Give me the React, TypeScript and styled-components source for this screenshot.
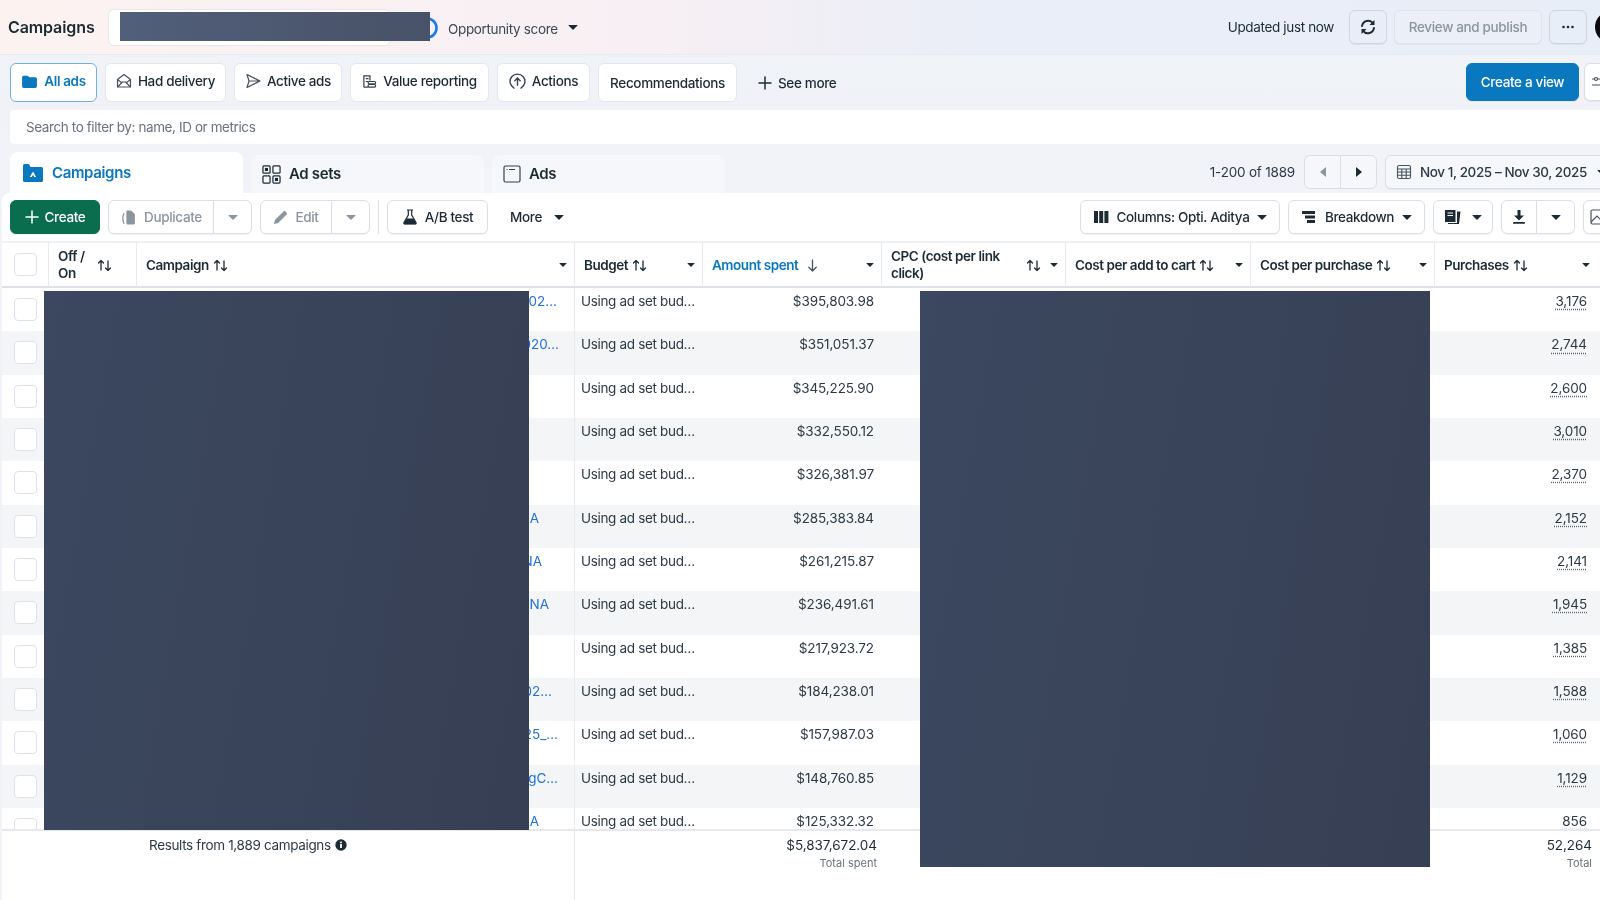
import React from "react";
import styled, { createGlobalStyle } from "styled-components";

const Global = createGlobalStyle`
  html, body { margin: 0; padding: 0; background: #f0f3f8; }
  * { box-sizing: border-box; }
  body { font-family: Inter, "Noto Sans", "Liberation Sans", sans-serif; color: #1c2b33; font-size: 14px; letter-spacing: -.35px; overflow: hidden; }
`;

const Page = styled.div`
  position: relative; width: 1600px; height: 900px; overflow: hidden; display: flex; flex-direction: column;
  background: linear-gradient(180deg, #eff3f8 0, #f0f2f7 110px, #f1f3f8 193px);
  filter: blur(.3px);
`;
const Redaction = styled.div<{ $x: number; $y: number; $w: number; $h: number; $light?: boolean }>`
  position: absolute; left: ${p => p.$x}px; top: ${p => p.$y}px; width: ${p => p.$w}px; height: ${p => p.$h}px;
  background: ${p => p.$light ? "linear-gradient(90deg,#525f7a,#485268)" : "linear-gradient(100deg,#3b485f,#373f54)"};
`;
const TopBar = styled.header`
  height: 55px; flex: none; display: flex; align-items: center; padding-left: 8px; overflow: hidden;
  background: linear-gradient(90deg, #fcf3f1 0, #f7eff3 40%, #eaeef8 62%, #e8eef8 100%);
  border-bottom: 1px solid #e8eaef;
`;
const Title = styled.h1`margin: 0; font-size: 16px; font-weight: 600; line-height: 20px; width: 100px; flex: none; letter-spacing: -.1px;`;
const Pill = styled.div`width: 283px; height: 37px; margin-top: 1px; background: #fff; border: 1px solid #e4e6ec; border-radius: 6px; flex: none;`;
const Ring = styled.svg`width: 22px; height: 22px; margin-left: 25px; margin-top: 2px; flex: none;`;
const ScoreLabel = styled.span`margin-left: 10px; margin-top: 3px; font-size: 13.5px; color: #3b4a55;`;
const TopRight = styled.div`margin-left: auto; margin-right: -27px; display: flex; align-items: center; flex: none; gap: 7px;`;
const Updated = styled.span`font-size: 13.5px; margin-right: 8px;`;
const Btn = styled.div<{ $w?: number; $h?: number; $off?: boolean; $active?: boolean; $flat?: boolean; $gap?: number }>`
  display: inline-flex; align-items: center; justify-content: center; gap: ${p => p.$gap ?? 6}px; flex: none;
  width: ${p => p.$w ? p.$w + "px" : "auto"}; height: ${p => p.$h ?? 34}px;
  background: ${p => p.$flat ? "transparent" : "#fff"}; border-radius: 6px;
  border: ${p => p.$flat ? "none" : p.$active ? "1px solid #6fb0dc" : "1px solid #dadfe6"};
  color: ${p => p.$off ? "#8b959e" : p.$active ? "#0a78be" : "#1c2b33"};
  font-size: 13.5px; font-weight: ${p => p.$active ? 600 : 500}; white-space: nowrap;
  box-shadow: ${p => p.$flat ? "none" : "0 1px 0 rgba(30,50,80,.06)"};
`;
const TopBtn = styled(Btn)<{ $ghost?: boolean }>`
  background: ${p => p.$ghost ? "#eaeff8" : "transparent"}; border-color: ${p => p.$ghost ? "#dfe4ec" : "#cfd5de"};
`;
const Avatar = styled.div`width: 32px; height: 32px; border-radius: 50%; background: #0b0b0f; flex: none; margin-left: 1px;`;

const ViewsBar = styled.nav`height: 55px; flex: none; display: flex; align-items: flex-start; padding: 8px 0 0 10px; gap: 8px; overflow: hidden;`;
const ViewBtn = styled(Btn)<{ $lift?: boolean }>`height: 39px; padding-bottom: ${p => p.$lift ? 3 : 0}px; border-color: ${p => p.$active ? "#6fb0dc" : "#e3e6eb"}; box-shadow: none; font-weight: ${p => p.$active ? 600 : 500};`;
const SeeMore = styled(Btn)`height: 39px; margin-left: 13px; gap: 6px; color: #1c2b33;`;
const ViewsRight = styled.div`margin-left: auto; margin-right: -40px; display: flex; gap: 5px; flex: none;`;
const PrimaryBtn = styled(Btn)`background: #0a78be; border-color: #0a78be; color: #fff; height: 38px; width: 113px;`;
const EdgeBtn = styled(Btn)`justify-content: flex-start; padding-left: 6px;`;

const SearchRow = styled.div`height: 34px; flex: none; margin-left: 10px; background: #fff; border-radius: 4px 0 0 4px; padding-left: 16px; display: flex; align-items: center; color: #67727b; font-size: 13.5px; letter-spacing: -.4px;`;

const TabsRow = styled.div`height: 49px; flex: none; display: flex; align-items: flex-end; padding-left: 10px; gap: 8px; overflow: hidden;`;
const Tab = styled.div<{ $active?: boolean }>`
  width: 233px; height: ${p => p.$active ? 41 : 38}px; border-radius: 8px 8px 0 0; flex: none;
  background: ${p => p.$active ? "#fff" : "#f5f7fa"}; display: flex; align-items: center; gap: 8px;
  padding-left: ${p => p.$active ? 12 : 11}px; font-size: 15px; font-weight: 600; line-height: 24px; letter-spacing: -.35px;
  color: ${p => p.$active ? "#0a78be" : "#1c2b33"};
`;
const TabsRight = styled.div`margin-left: auto; margin-right: -40px; align-self: flex-start; margin-top: 11px; display: flex; align-items: center; flex: none;`;
const Range = styled.span`font-size: 13.5px; margin-right: 9px; color: #2b3a44; letter-spacing: -.2px;`;
const Pager = styled.div`display: flex; width: 73px; height: 34px; border: 1px solid #dadfe6; border-radius: 6px; background: #f5f7fa; margin-right: 8px;`;
const PagerCell = styled.div<{ $split?: boolean }>`flex: 1; display: flex; align-items: center; justify-content: center; border-right: ${p => p.$split ? "1px solid #dadfe6" : "none"};`;
const DateBtn = styled(Btn)`width: 255px; background: #f5f7fa; justify-content: flex-start; padding-left: 10px; gap: 8px; font-weight: 500; color: #2b3a44; letter-spacing: -.42px;`;
const DateCaret = styled.span`display: inline-flex; margin-left: 2px;`;

const Panel = styled.main`flex: 1; margin-left: 2px; background: #fff; border-radius: 8px 0 0 8px; display: flex; flex-direction: column; min-height: 0;`;
const Toolbar = styled.div`height: 50px; flex: none; display: flex; align-items: flex-start; padding: 7px 0 0 8px; gap: 8px; border-bottom: 2px solid #f0f1f4; overflow: hidden;`;
const CreateBtn = styled(Btn)`background: #0a6e4e; border-color: #0a6e4e; color: #fff; width: 90px;`;
const Split = styled.div<{ $w: number }>`display: flex; flex: none; width: ${p => p.$w}px; height: 34px; border: 1px solid #dadfe6; border-radius: 6px; box-shadow: 0 1px 0 rgba(30,50,80,.06);`;
const SplitMain = styled.div<{ $off?: boolean }>`flex: 1; display: flex; align-items: center; justify-content: center; gap: 7px; font-size: 13.5px; font-weight: 500; color: ${p => p.$off ? "#8b959e" : "#1c2b33"}; border-right: 1px solid #dadfe6;`;
const SplitEnd = styled.div`width: 37px; flex: none; display: flex; align-items: center; justify-content: center;`;
const Sep = styled.div`width: 1px; height: 34px; background: #dfe2e7; flex: none;`;
const More = styled(Btn)`margin-left: 12px; gap: 12px; width: 58px;`;
const ToolRight = styled.div`margin-left: auto; margin-right: -43px; display: flex; gap: 8px; flex: none;`;

const COLS = "47px 88px 438px 128px 179px 184px 185px 184px 165px";
const HeadRow = styled.div`display: grid; grid-template-columns: ${COLS}; height: 45px; flex: none; border-bottom: 2px solid #dfe2e6;`;
const HeadCell = styled.div<{ $accent?: boolean; $last?: boolean; $gap?: number }>`
  display: flex; align-items: center; padding: 1px ${p => p.$last ? 10 : 7}px 0 9px; gap: ${p => p.$gap ?? 4}px; font-size: 13.5px; font-weight: 600; line-height: 17px; letter-spacing: -.45px;
  color: ${p => p.$accent ? "#0a78be" : "#1c2b33"}; border-right: ${p => p.$last ? "none" : "1px solid #e8eaee"};
`;
const HeadText = styled.span<{ $w: number }>`flex: none; width: ${p => p.$w}px;`;
const CaretSlot = styled.span`margin-left: auto; display: inline-flex; flex: none;`;
const CheckCell = styled.div<{ $bordered?: boolean }>`display: flex; align-items: center; padding-left: 12px; border-right: ${p => p.$bordered ? "1px solid #e8eaee" : "none"};`;
const Box = styled.div`width: 23px; height: 23px; background: #fff; border: 1px solid #dfe3e8; border-radius: 4px;`;

const Rows = styled.div`flex: 1; min-height: 0; overflow: hidden;`;
const Row = styled.div<{ $alt: boolean }>`display: grid; grid-template-columns: ${COLS}; height: 43.33px; background: ${p => p.$alt ? "#f4f5f7" : "#fff"};`;
const Cell = styled.div<{ $right?: boolean; $divider?: boolean; $inset?: number }>`
  padding: 4px ${p => p.$inset ?? 8}px 0 6px; line-height: 18px; font-size: 13.5px; color: #2b3a44; white-space: nowrap; overflow: hidden;
  text-align: ${p => p.$right ? "right" : "left"}; letter-spacing: ${p => p.$right ? "-.1px" : "-.33px"}; border-right: ${p => p.$divider ? "1px solid #e9ebef" : "none"};
`;
const LinkText = styled.a<{ $inset: number }>`display: block; text-align: right; padding-right: ${p => p.$inset}px; color: #1f6fdc; letter-spacing: 0;`;
const Dotted = styled.span`text-decoration: underline dotted #5a6670; text-underline-offset: 3px;`;
const Foot = styled.footer`display: grid; grid-template-columns: ${COLS}; height: 71px; flex: none; border-top: 2px solid #e6e8eb; background: #fff;`;
const ResultsCell = styled.div`grid-column: 1 / span 3; padding: 5px 0 0 147px; font-size: 13.5px; line-height: 18px; color: #2b3a44; display: flex; gap: 4px; align-items: flex-start; border-right: 1px solid #e9ebef;`;
const InfoSlot = styled.span`display: inline-flex; height: 18px; align-items: center;`;
const TotalCell = styled.div<{ $inset?: number }>`text-align: right; padding: 5px ${p => p.$inset ?? 5}px 0 0;`;
const TotalValue = styled.div`font-size: 13.5px; line-height: 18px; font-weight: 400; color: #1c2b33; min-height: 18px; letter-spacing: -.05px;`;
const TotalNote = styled.div`font-size: 11px; line-height: 18px; color: #67727b; letter-spacing: 0;`;

const Glyph = styled.svg<{ $s?: number }>`width: ${p => p.$s ?? 16}px; height: ${p => p.$s ?? 16}px; flex: none; display: block;`;
const Caret = styled.i<{ $c?: string; $w?: number }>`
  display: inline-block; flex: none; width: 0; height: 0; font-style: normal;
  border-left: ${p => p.$w ?? 5}px solid transparent; border-right: ${p => p.$w ?? 5}px solid transparent;
  border-top: ${p => Math.round((p.$w ?? 5) * 1.05)}px solid ${p => p.$c ?? "#1c2b33"}; border-radius: 1px;
`;
const Side = styled.i<{ $left?: boolean; $c: string }>`
  display: block; width: 0; height: 0; border-top: 5px solid transparent; border-bottom: 5px solid transparent;
  ${p => p.$left ? `border-right: 6px solid ${p.$c};` : `border-left: 6px solid ${p.$c};`}
`;

type IP = { s?: number; c?: string };
const Folder = ({ s = 17, c = "#0a78be" }: IP) => <Glyph $s={s} viewBox="0 0 16 16"><path fill={c} d="M1 4a1.5 1.5 0 0 1 1.5-1.5h3.2c.5 0 .9.2 1.2.6l.8.9h5.8A1.5 1.5 0 0 1 15 5.5v7a1.5 1.5 0 0 1-1.5 1.5h-11A1.5 1.5 0 0 1 1 12.5z" /></Glyph>;
const Envelope = ({ s = 16 }: IP) => <Glyph $s={s} viewBox="0 0 16 16" fill="none" stroke="#46535c" strokeWidth="1.2" strokeLinejoin="round"><path d="M1.5 6.5 8 1.5l6.5 5v7.5h-13z" /><path d="M1.5 14 6.5 9h3l5 5M1.5 6.5 6 10M14.5 6.5 10 10" /></Glyph>;
const Send = ({ s = 16 }: IP) => <Glyph $s={s} viewBox="0 0 16 16" fill="none" stroke="#46535c" strokeWidth="1.2" strokeLinejoin="round"><path d="M2 1.5 15 8 2 14.5 4 8zM4 8h11" /></Glyph>;
const Value = ({ s = 15 }: IP) => <Glyph $s={s} viewBox="0 0 16 16" fill="none" stroke="#33414b" strokeWidth="1.3"><path d="M2 14V2h6.5v5M4 5h3M4 8h3" /><rect x="6.5" y="8" width="8" height="2.6" rx="1.2" /><rect x="6.5" y="11.2" width="8" height="2.8" rx="1.2" /><path d="M2 14h5" /></Glyph>;
const ActionIc = ({ s = 17 }: IP) => <Glyph $s={s} viewBox="0 0 16 16" fill="none" stroke="#33414b" strokeWidth="1.3" strokeLinecap="round"><path d="M4.7 14.2A7 7 0 1 1 11.3 14.2M8 11.5V5M5.5 7.3 8 4.8l2.5 2.5" /></Glyph>;
const Plus = ({ s = 14, c = "#1c2b33" }: IP) => <Glyph $s={s} viewBox="0 0 14 14" stroke={c} strokeWidth="1.5" strokeLinecap="round"><path d="M7 1v12M1 7h12" /></Glyph>;
const CampaignIc = () => <Glyph $s={22} viewBox="0 0 22 22"><path fill="#0a78be" d="M1 3.5A1.5 1.5 0 0 1 2.500 2h3.700c.5 0 1 .3 1.200.7L8.500 5h11A1.500 1.500 0 0 1 21 6.500v12a1.500 1.500 0 0 1-1.500 1.500h-17A1.500 1.500 0 0 1 1 18.500z" /><path fill="#fff" d="M11 9.500 14.200 15h-2l-1.200-2.200L9.800 15h-2z" /></Glyph>;
const AdSetsIc = () => <Glyph $s={19} viewBox="0 0 20 20" fill="none" stroke="#1c2b33" strokeWidth="1.3"><rect x="1" y="1" width="7.500" height="7.500" rx="1" /><rect x="11.500" y="1" width="7.500" height="7.500" rx="1" /><rect x="1" y="11.500" width="7.500" height="7.500" rx="1" /><rect x="11.500" y="11.500" width="7.500" height="7.500" rx="1" /><rect x="3.700" y="3.700" width="2" height="2" fill="#1c2b33" /><rect x="14.200" y="14.200" width="2" height="2" fill="#1c2b33" /></Glyph>;
const AdsIc = () => <Glyph $s={18} viewBox="0 0 18 18" fill="none" stroke="#33414b" strokeWidth="1.200"><rect x="1" y="1" width="16" height="16" rx="1.500" /><path d="M3.500 4.500h1M6 4.500h6" /></Glyph>;
const Dup = ({ s = 17, c = "#8b959e" }: IP) => <Glyph $s={s} viewBox="0 0 16 16"><path fill={c} d="M6 2.500A1 1 0 0 1 7 1.500h3.500L14 5v8.500a1 1 0 0 1-1 1H7a1 1 0 0 1-1-1z" /><path fill="none" stroke={c} strokeWidth="1.200" d="M3.800 4Q1.500 8.500 3.800 14" /></Glyph>;
const Pencil = ({ s = 15, c = "#8b959e" }: IP) => <Glyph $s={s} viewBox="0 0 16 16"><path fill={c} d="M11.500 1.200a1 1 0 0 1 1.400 0l1.900 1.900a1 1 0 0 1 0 1.400L5.500 13.800 1 15l1.200-4.500z" /></Glyph>;
const Flask = ({ s = 16 }: IP) => <Glyph $s={s} viewBox="0 0 16 16"><path fill="none" stroke="#1c2b33" strokeWidth="1.200" d="M5 1h6M6.300 1v5L2 13.500A1 1 0 0 0 3 15h10a1 1 0 0 0 1-1.500L9.700 6V1" /><path fill="#1c2b33" d="M4.600 9.500h6.800l2.800 4.500a.8.8 0 0 1-.7 1.200H2.500a.8.8 0 0 1-.7-1.200z" /></Glyph>;
const ColumnsIc = () => <Glyph $s={16} viewBox="0 0 16 16" fill="#1c2b33"><rect x="1" y="2" width="4" height="12" /><rect x="6.200" y="2" width="4" height="12" /><rect x="11.400" y="2" width="4" height="12" /></Glyph>;
const BreakdownIc = () => <Glyph $s={16} viewBox="0 0 16 16" fill="#1c2b33"><path d="M1 2h13v3H1zM4 6.500h10v3H4zM6 11h8v3H6z" /></Glyph>;
const ReportIc = () => <Glyph $s={18} viewBox="0 0 18 18" fill="#1c2b33"><path d="M1 2h10.500v12H1z" /><path d="M13 3.500h3.500L15 16H4v-1h9z" /><path stroke="#fff" strokeWidth="1" d="M3.500 5h5.500M3.500 7.500h5.500" /></Glyph>;
const DownloadIc = () => <Glyph $s={16} viewBox="0 0 16 16" fill="#1c2b33"><path d="M6.500 1h3v5.500H13L8 11.500 3 6.500h3.500z" /><rect x="2" y="13" width="12" height="1.800" rx=".9" /></Glyph>;
const ChartIc = () => <Glyph $s={16} viewBox="0 0 16 16" fill="none" stroke="#46535c" strokeWidth="1.200"><rect x="1" y="1" width="14" height="14" rx="1.500" /><path d="M1 13 7 7l3 3 5-5" /></Glyph>;
const SlidersIc = () => <Glyph $s={16} viewBox="0 0 16 16" fill="none" stroke="#46535c" strokeWidth="1.200"><path d="M1 5h14M1 11h14" /><circle cx="5" cy="5" r="1.500" fill="#fff" /><circle cx="11" cy="11" r="1.500" fill="#fff" /></Glyph>;
const Calendar = () => <Glyph $s={16} viewBox="0 0 16 16" fill="none" stroke="#46535c" strokeWidth="1.100"><rect x="1.500" y="1.500" width="13" height="13" rx="1.500" /><path d="M1.500 5h13M1.500 8h13M1.500 11.200h13M5.800 5v9.500M10.200 5v9.500" /></Glyph>;
const Refresh = () => <Glyph $s={18} viewBox="0 0 18 18" fill="none" stroke="#1c2b33" strokeWidth="1.900" strokeLinecap="round"><path d="M3 8A6.200 6.200 0 0 1 14 5.200M15 10a6.200 6.200 0 0 1-11 2.800" /><path fill="#1c2b33" stroke="none" d="M15.500 2v5h-5zM2.500 16v-5h5z" /></Glyph>;
const Dots = () => <Glyph $s={14} viewBox="0 0 14 14" fill="#1c2b33"><circle cx="2.500" cy="7" r="1.300" /><circle cx="7" cy="7" r="1.300" /><circle cx="11.500" cy="7" r="1.300" /></Glyph>;
const Info = () => <Glyph $s={12} viewBox="0 0 12 12"><circle cx="6" cy="6" r="5.700" fill="#1c2b33" /><rect x="5.100" y="5" width="1.800" height="4" fill="#fff" /><rect x="5.100" y="2.600" width="1.800" height="1.600" fill="#fff" /></Glyph>;
const Sort = ({ down }: { down?: boolean }) => (
  <Glyph $s={15} viewBox="0 0 15 15" fill="none" stroke={down ? "#46535c" : "#1c2b33"} strokeWidth="1.300" strokeLinecap="round" strokeLinejoin="round">
    {down ? <path d="M7.500 2v11M3.800 9.300l3.700 3.700 3.700-3.700" /> : <path d="M4 12V2.500M1.500 5 4 2.500 6.500 5M11 3v9.500M8.500 10l2.500 2.500 2.500-2.500" />}
  </Glyph>
);

const rows = [
  { link: "202…", inset: 17, amount: "$395,803.98", n: "3,176" },
  { link: "020…", inset: 15, amount: "$351,051.37", n: "2,744" },
  { link: "", inset: 0, amount: "$345,225.90", n: "2,600" },
  { link: "", inset: 0, amount: "$332,550.12", n: "3,010" },
  { link: "", inset: 0, amount: "$326,381.97", n: "2,370" },
  { link: "A", inset: 35, amount: "$285,383.84", n: "2,152" },
  { link: "NA", inset: 32, amount: "$261,215.87", n: "2,141" },
  { link: ".NA", inset: 25, amount: "$236,491.61", n: "1,945" },
  { link: "", inset: 0, amount: "$217,923.72", n: "1,385" },
  { link: "02…", inset: 22, amount: "$184,238.01", n: "1,588" },
  { link: "25_…", inset: 16, amount: "$157,987.03", n: "1,060" },
  { link: "ngC…", inset: 16, amount: "$148,760.85", n: "1,129" },
  { link: "A", inset: 35, amount: "$125,332.32", n: "856" },
];

export default function App() {
  return (
    <Page>
      <Global />
      <TopBar>
        <Title>Campaigns</Title>
        <Pill />
        <Ring viewBox="0 0 22 22"><circle cx="11" cy="11" r="9.500" fill="none" stroke="#1a7ae8" strokeWidth="2.600" /></Ring>
        <ScoreLabel>Opportunity score</ScoreLabel>
        <Btn $flat $w={30} $h={20}><Caret $w={5} /></Btn>
        <TopRight>
          <Updated>Updated just now</Updated>
          <TopBtn $w={38}><Refresh /></TopBtn>
          <TopBtn $w={148} $off $ghost>Review and publish</TopBtn>
          <TopBtn $w={38}><Dots /></TopBtn>
          <Avatar />
        </TopRight>
      </TopBar>

      <ViewsBar>
        <ViewBtn $w={87} $active $lift><Folder />All ads</ViewBtn>
        <ViewBtn $w={121} $lift><Envelope />Had delivery</ViewBtn>
        <ViewBtn $w={108} $lift><Send />Active ads</ViewBtn>
        <ViewBtn $w={139} $lift><Value />Value reporting</ViewBtn>
        <ViewBtn $w={93} $lift><ActionIc />Actions</ViewBtn>
        <ViewBtn $w={139}>Recommendations</ViewBtn>
        <SeeMore $flat><Plus />See more</SeeMore>
        <ViewsRight>
          <PrimaryBtn>Create a view</PrimaryBtn>
          <EdgeBtn $w={56} $h={38}><SlidersIc /></EdgeBtn>
        </ViewsRight>
      </ViewsBar>

      <SearchRow>Search to filter by: name, ID or metrics</SearchRow>

      <TabsRow>
        <Tab $active><CampaignIc />Campaigns</Tab>
        <Tab><AdSetsIc />Ad sets</Tab>
        <Tab><AdsIc />Ads</Tab>
        <TabsRight>
          <Range>1-200 of 1889</Range>
          <Pager>
            <PagerCell $split><Side $left $c="#8b959e" /></PagerCell>
            <PagerCell><Side $c="#1c2b33" /></PagerCell>
          </Pager>
          <DateBtn><Calendar />Nov 1, 2025 – Nov 30, 2025<DateCaret><Caret $w={4} /></DateCaret></DateBtn>
        </TabsRight>
      </TabsRow>

      <Panel>
        <Toolbar>
          <CreateBtn><Plus c="#fff" />Create</CreateBtn>
          <Split $w={144}><SplitMain $off><Dup />Duplicate</SplitMain><SplitEnd><Caret $c="#8b959e" /></SplitEnd></Split>
          <Split $w={110}><SplitMain $off><Pencil />Edit</SplitMain><SplitEnd><Caret $c="#8b959e" /></SplitEnd></Split>
          <Sep />
          <Btn $w={101} $gap={7}><Flask />A/B test</Btn>
          <More $flat>More<Caret /></More>
          <ToolRight>
            <Btn $w={200} $gap={8}><ColumnsIc />Columns: Opti. Aditya<Caret /></Btn>
            <Btn $w={137} $gap={8}><BreakdownIc />Breakdown<Caret /></Btn>
            <Btn $w={60} $gap={10}><ReportIc /><Caret /></Btn>
            <Split $w={74}><SplitMain><DownloadIc /></SplitMain><SplitEnd><Caret /></SplitEnd></Split>
            <EdgeBtn $w={60}><ChartIc /></EdgeBtn>
          </ToolRight>
        </Toolbar>

        <HeadRow>
          <CheckCell $bordered><Box /></CheckCell>
          <HeadCell $gap={12}><span>Off /<br />On</span><Sort /></HeadCell>
          <HeadCell>Campaign<Sort /><CaretSlot><Caret $w={4} /></CaretSlot></HeadCell>
          <HeadCell>Budget<Sort /><CaretSlot><Caret $w={4} /></CaretSlot></HeadCell>
          <HeadCell $accent $gap={7}>Amount spent<Sort down /><CaretSlot><Caret $w={4} /></CaretSlot></HeadCell>
          <HeadCell><HeadText $w={131}>CPC (cost per link click)</HeadText><Sort /><CaretSlot><Caret $w={4} /></CaretSlot></HeadCell>
          <HeadCell>Cost per add to cart<Sort /><CaretSlot><Caret $w={4} /></CaretSlot></HeadCell>
          <HeadCell>Cost per purchase<Sort /><CaretSlot><Caret $w={4} /></CaretSlot></HeadCell>
          <HeadCell $last>Purchases<Sort /><CaretSlot><Caret $w={4} /></CaretSlot></HeadCell>
        </HeadRow>

        <Rows>
          {rows.map((r, i) => (
            <Row key={r.amount} $alt={i % 2 === 1}>
              <CheckCell><Box /></CheckCell>
              <Cell />
              <Cell $divider $inset={0}>{r.link && <LinkText $inset={r.inset}>{r.link}</LinkText>}</Cell>
              <Cell>Using ad set bud…</Cell>
              <Cell $right>{r.amount}</Cell>
              <Cell /><Cell /><Cell />
              <Cell $right $inset={13}><Dotted>{r.n}</Dotted></Cell>
            </Row>
          ))}
        </Rows>

        <Foot>
          <ResultsCell>Results from 1,889 campaigns <InfoSlot><Info /></InfoSlot></ResultsCell>
          <TotalCell />
          <TotalCell><TotalValue>$5,837,672.04</TotalValue><TotalNote>Total spent</TotalNote></TotalCell>
          <TotalCell><TotalValue /><TotalNote>Per Action</TotalNote></TotalCell>
          <TotalCell><TotalValue /><TotalNote>Per Action</TotalNote></TotalCell>
          <TotalCell><TotalValue /><TotalNote>Per Action</TotalNote></TotalCell>
          <TotalCell $inset={8}><TotalValue>52,264</TotalValue><TotalNote>Total</TotalNote></TotalCell>
        </Foot>
      </Panel>

      <Redaction $light $x={120} $y={12} $w={310} $h={29} />
      <Redaction $x={44} $y={291} $w={485} $h={539} />
      <Redaction $x={920} $y={291} $w={510} $h={576} />
    </Page>
  );
}
